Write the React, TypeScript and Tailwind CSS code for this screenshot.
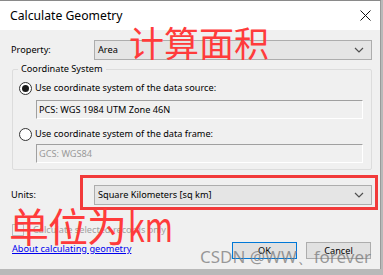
import React from "react";

function Chevron() {
  return (
    <svg width="10" height="6" viewBox="0 0 10 6" className="shrink-0">
      <path d="M1 1 L5 5 L9 1" fill="none" stroke="#505050" strokeWidth="1.2" />
    </svg>
  );
}

function Combo({ text }: { text: string }) {
  return (
    <div className="flex-1 h-[20px] bg-[#e5e5e5] border border-[#adadad] flex items-center justify-between pl-[3px] pr-[7px]">
      <span className="text-[9.2px] leading-none text-black">{text}</span>
      <Chevron />
    </div>
  );
}

function Radio({ checked }: { checked?: boolean }) {
  return (
    <div className="w-[13px] h-[13px] rounded-full border border-[#333] bg-white flex items-center justify-center shrink-0">
      {checked && <div className="w-[7px] h-[7px] rounded-full bg-[#1a1a1a]" />}
    </div>
  );
}

function Field({ text, dim }: { text: string; dim?: boolean }) {
  return (
    <div className="ml-[23px] mr-[8px] h-[19px] border-t border-l border-t-[#a0a0a0] border-l-[#a0a0a0] border-b border-r border-b-white border-r-white bg-[#f0f0f0] flex items-center pl-[2px]">
      <span className={`text-[9.2px] leading-none ${dim ? "text-[#9a9a9a]" : "text-black"}`}>{text}</span>
    </div>
  );
}

export default function App() {
  return (
    <div className="w-[383px] h-[275px] bg-[#b9b9b9] overflow-hidden relative font-['Noto_Sans','Open_Sans',sans-serif]">
      <div className="w-[381px] h-[269px] flex flex-col border-t border-t-[#8a8a8a] border-r border-r-[#9a9a9a]">
        <div className="h-[29px] bg-white flex items-center justify-between pl-[10px] pr-[9px] shrink-0">
          <span className="text-[12.2px] leading-[15px] text-black">Calculate Geometry</span>
          <svg width="11" height="11" viewBox="0 0 11 11">
            <path d="M0.5 0.5 L10.5 10.5 M10.5 0.5 L0.5 10.5" stroke="#111" strokeWidth="1" />
          </svg>
        </div>
        <div className="flex-1 bg-[#f0f0f0] flex flex-col pl-[10px] pr-[8px]">
          <div className="flex items-center mt-[10px]">
            <span className="w-[84px] pl-[1px] text-[9.2px] leading-[14px] text-black">Property:</span>
            <Combo text="Area" />
          </div>

          <fieldset className="mt-[1px] border border-[#dcdcdc] rounded-[2px] pb-[6px] ml-[2px]">
            <legend className="ml-[5px] px-[3px] text-[9.2px] text-black leading-[16px]">Coordinate System</legend>
            <div className="flex items-center gap-[3px] ml-[6px] mt-[4px] h-[14px]">
              <Radio checked />
              <span className="text-[9.2px] text-black leading-[14px]">Use coordinate system of the data source:</span>
            </div>
            <div className="mt-[5px]">
              <Field text="PCS: WGS 1984 UTM Zone 46N" />
            </div>
            <div className="flex items-center gap-[3px] ml-[6px] mt-[8px] h-[14px]">
              <Radio />
              <span className="text-[9.2px] text-black leading-[14px]">Use coordinate system of the data frame:</span>
            </div>
            <div className="mt-[3px]">
              <Field text="GCS: WGS84" dim />
            </div>
          </fieldset>

          <div className="flex items-center mt-[15px]">
            <span className="w-[84px] pl-[1px] text-[9.2px] leading-[14px] text-black">Units:</span>
            <Combo text="Square Kilometers [sq km]" />
          </div>

          <div className="flex items-center gap-[9px] mt-[19px] ml-[2px] h-[12px]">
            <div className="w-[12px] h-[12px] border border-[#bcbcbc] bg-[#f0f0f0]" />
            <span className="text-[9.2px] text-[#a0a0a0] leading-[14px]">Calculate selected records only</span>
          </div>

          <div className="flex justify-between mt-[6px]">
            <span className="ml-[2px] text-[9.2px] text-[#0000ee] underline leading-[14px]">About calculating geometry</span>
            <div className="flex gap-[9px] mr-[1px]">
              <div className="w-[65px] h-[17px] bg-[#e1e1e1] border border-[#0078d7] flex items-center justify-center text-[9.2px] text-black">OK</div>
              <div className="w-[65px] h-[17px] bg-[#e1e1e1] border border-[#adadad] flex items-center justify-center text-[9.2px] text-black">Cancel</div>
            </div>
          </div>
        </div>
      </div>

      <div className="absolute left-[129px] top-[24px] text-[35px] leading-none text-[#ff3b3b] whitespace-nowrap font-['Noto_Sans_CJK_SC',sans-serif]">计算面积</div>
      <div className="absolute left-[80px] top-[175px] w-[298px] h-[35px] border-[3px] border-[#f23a3a]" />
      <div className="absolute left-[9px] top-[205px] text-[40px] leading-none text-[#ff3b3b] tracking-[-1px] whitespace-nowrap font-['Noto_Sans_CJK_SC',sans-serif]">
        单位为<span className="inline-block tracking-normal scale-x-[0.76] origin-left ml-[2px]">km</span>
      </div>
      <div className="absolute left-[200px] top-[248px] text-[17px] leading-none text-[#7a7a7a]/75 whitespace-nowrap">CSDN @WW、forever</div>
    </div>
  );
}
